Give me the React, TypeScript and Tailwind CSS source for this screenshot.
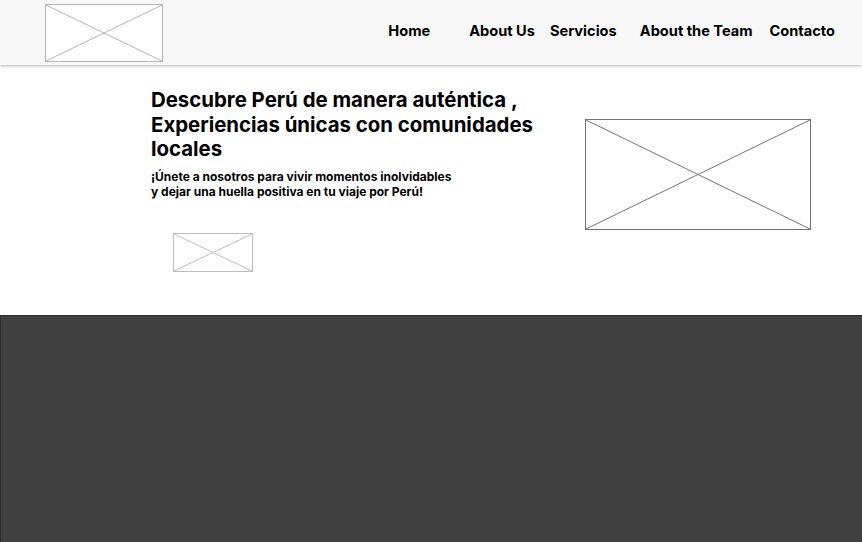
import React from "react";

// Wireframe image placeholder: box with an X through it
const Placeholder = ({ className, stroke }: { className: string; stroke: string }) => (
  <div className={className}>
    <svg width="100%" height="100%" viewBox="0 0 100 100" preserveAspectRatio="none">
      <line x1="0" y1="0" x2="100" y2="100" stroke={stroke} strokeWidth="1" vectorEffect="non-scaling-stroke" />
      <line x1="100" y1="0" x2="0" y2="100" stroke={stroke} strokeWidth="1" vectorEffect="non-scaling-stroke" />
    </svg>
  </div>
);

export default function App() {
  return (
    <div className="w-full h-screen flex flex-col bg-white font-['Inter',sans-serif] text-black overflow-hidden">
      {/* ── HEADER ── */}
      <header className="relative z-10 h-[65px] shrink-0 bg-[#f8f8f8] shadow-[0_1px_3px_rgba(0,0,0,0.3)] flex items-center">
        <Placeholder className="ml-[45px] w-[118px] h-[58px] bg-white border border-[#b4b4b8]" stroke="#b4b4b8" />
        <nav className="ml-auto mr-[27px] flex items-center text-[14.6px] font-bold -mt-[2px]">
          <a>Home</a>
          <a className="ml-[39px]">About Us</a>
          <a className="ml-[15px]">Servicios</a>
          <a className="ml-[23px]">About the Team</a>
          <a className="ml-[17px]">Contacto</a>
        </nav>
      </header>

      {/* ── HERO ── */}
      <section className="h-[250px] shrink-0 flex">
        <div className="ml-[151px] pt-[23px] flex flex-col">
          <h1 className="w-[395px] text-[20.4px] leading-[24.5px] font-bold">
            Descubre Perú de manera auténtica , Experiencias únicas con comunidades locales
          </h1>
          <p className="mt-[7px] text-[12px] leading-[15px] font-bold">
            ¡Únete a nosotros para vivir momentos inolvidables
            <br />
            y dejar una huella positiva en tu viaje por Perú!
          </p>
          <Placeholder className="mt-[34px] ml-[22px] w-[80px] h-[39px] border border-[#bdbdbd]" stroke="#bdbdbd" />
        </div>
        <div className="ml-auto mr-[51px] pt-[54px]">
          <Placeholder className="w-[226px] h-[111px] border-[1.5px] border-[#6f7480]" stroke="#6f7480" />
        </div>
      </section>

      {/* ── DARK BLOCK ── */}
      <section className="flex-1 bg-[#414141] border-t border-l border-[#2e2e2e]" />
    </div>
  );
}
